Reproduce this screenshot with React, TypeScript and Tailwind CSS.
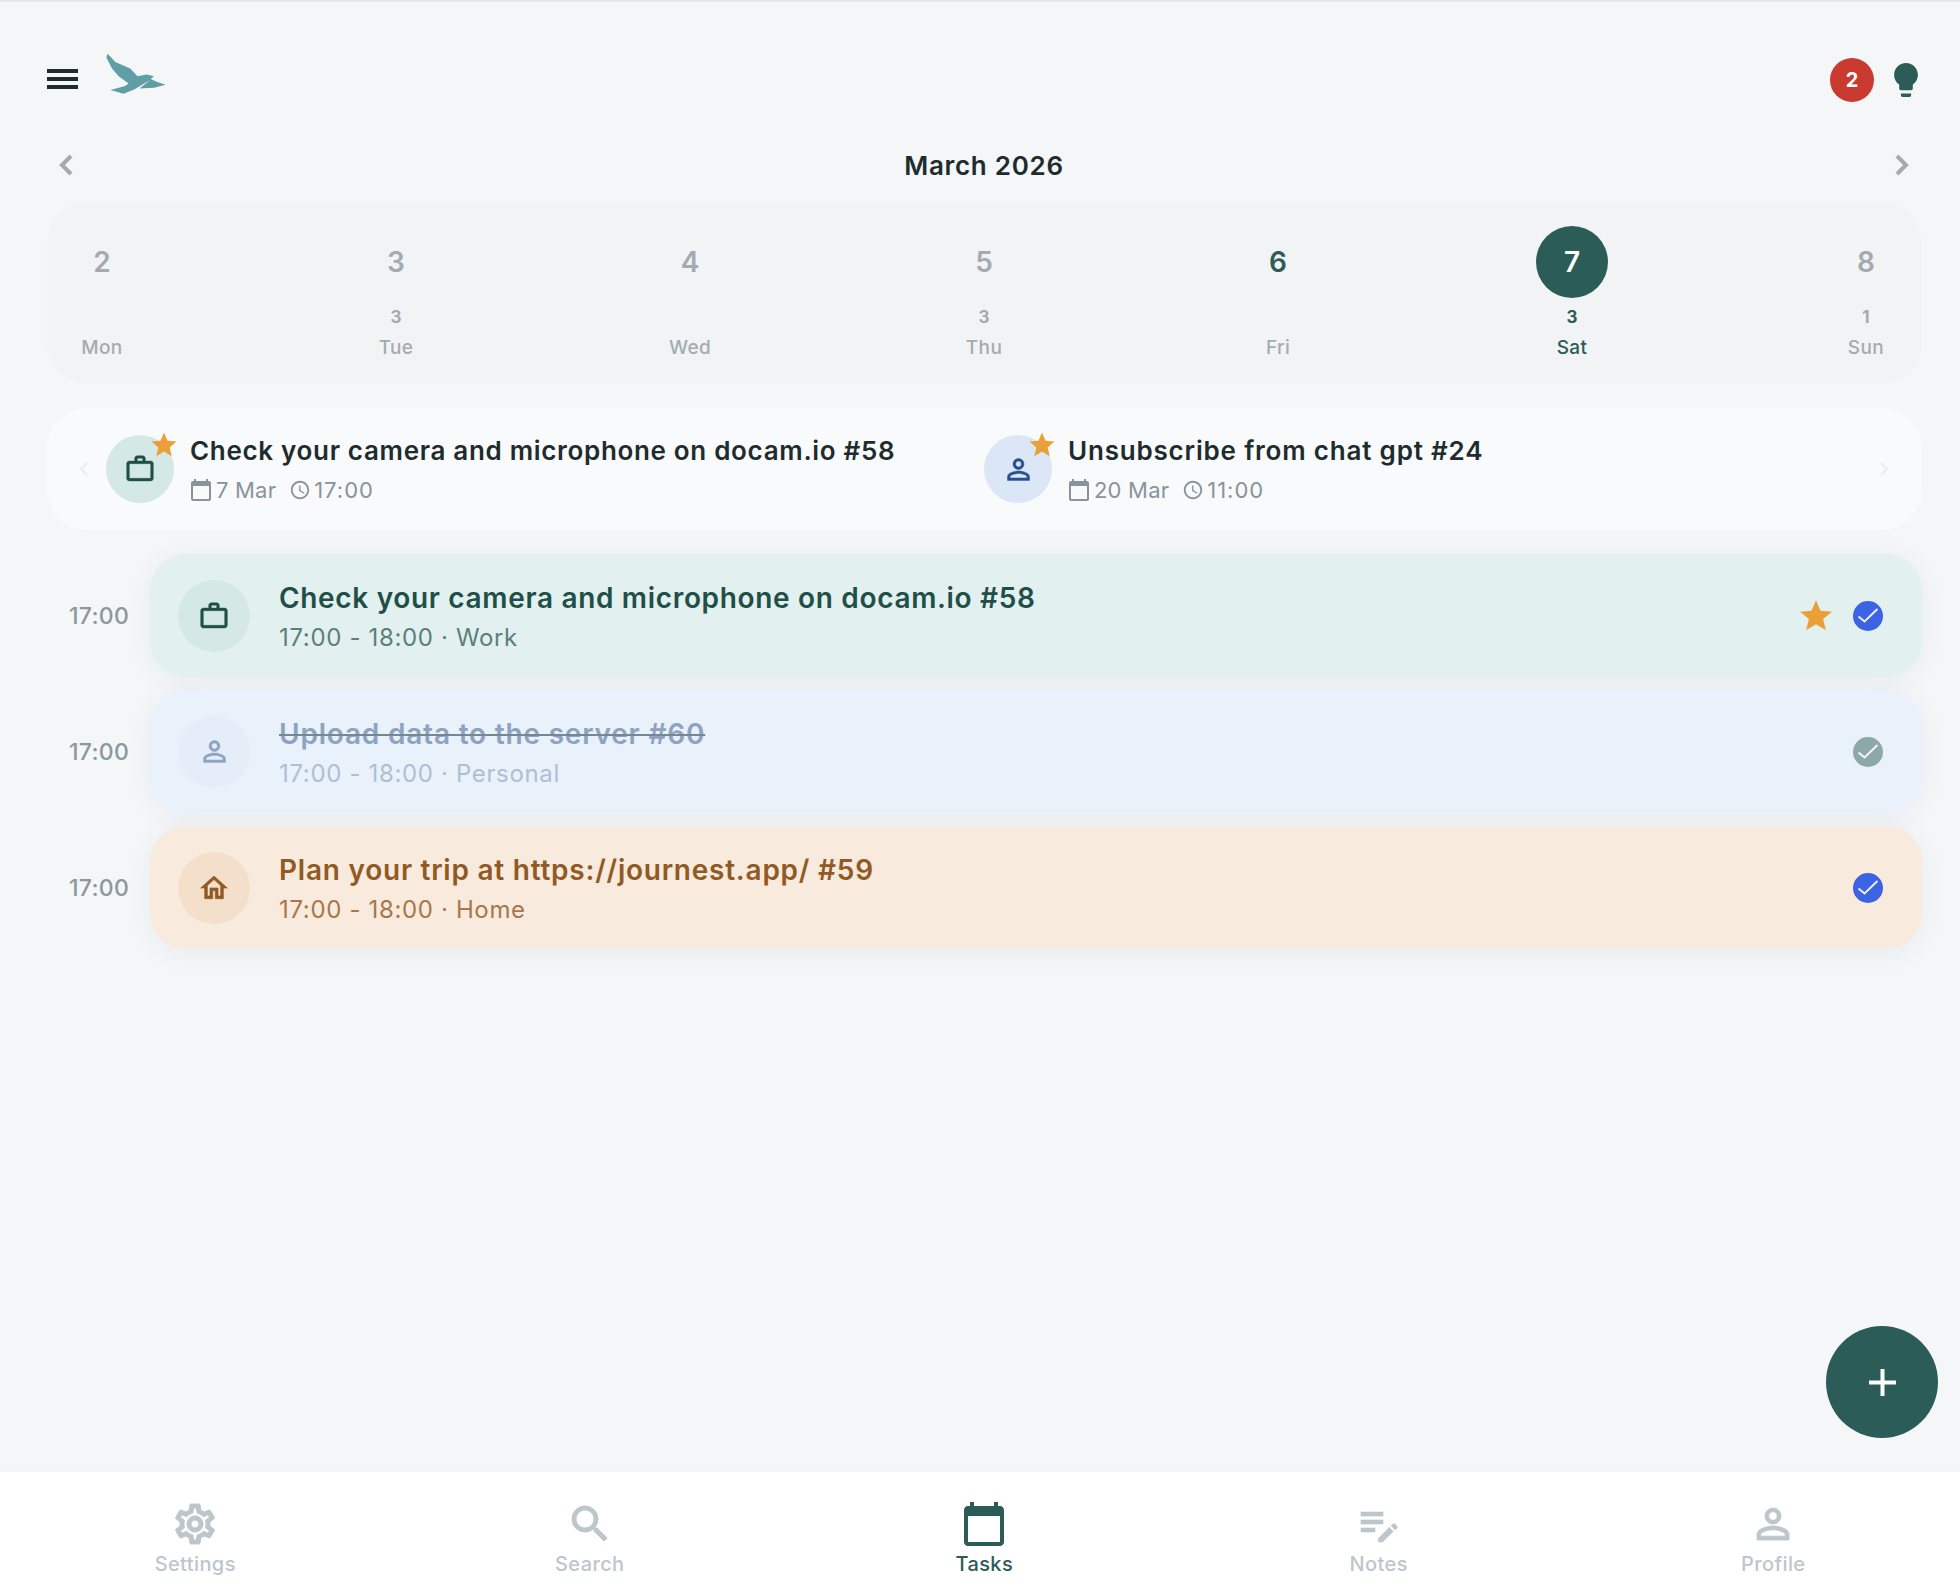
import { MdOutlineAccessTime, MdStar, MdChevronLeft, MdChevronRight } from "react-icons/md";
import type { ReactNode } from "react";

const CALENDAR = "M20 3h-1V1h-2v2H7V1H5v2H4c-1.1 0-2 .9-2 2v16c0 1.1.9 2 2 2h16c1.1 0 2-.9 2-2V5c0-1.1-.9-2-2-2zm0 18H4V8h16v13z";
const SETTINGS = "M19.43 12.98c.04-.32.07-.64.07-.98 0-.34-.03-.66-.07-.98l2.11-1.65c.19-.15.24-.42.12-.64l-2-3.46a.5.5 0 0 0-.61-.22l-2.49 1c-.52-.4-1.08-.73-1.69-.98l-.38-2.65A.488.488 0 0 0 14 2h-4c-.25 0-.46.18-.49.42l-.38 2.65c-.61.25-1.17.59-1.69.98l-2.49-1a.566.566 0 0 0-.18-.03c-.17 0-.34.09-.43.25l-2 3.46c-.13.22-.07.49.12.64l2.11 1.65c-.04.32-.07.65-.07.98 0 .33.03.66.07.98l-2.11 1.65c-.19.15-.24.42-.12.64l2 3.46a.5.5 0 0 0 .61.22l2.49-1c.52.4 1.08.73 1.69.98l.38 2.65c.03.24.24.42.49.42h4c.25 0 .46-.18.49-.42l.38-2.65c.61-.25 1.17-.59 1.69-.98l2.49 1c.06.02.12.03.18.03.17 0 .34-.09.43-.25l2-3.46c.12-.22.07-.49-.12-.64l-2.11-1.65zm-1.98-1.71c.04.31.05.52.05.73 0 .21-.02.43-.05.73l-.14 1.13.89.7 1.08.84-.7 1.21-1.27-.51-1.04-.42-.9.68c-.43.32-.84.56-1.25.73l-1.06.43-.16 1.13-.2 1.35h-1.4l-.19-1.35-.16-1.13-1.06-.43c-.43-.18-.83-.41-1.23-.71l-.91-.7-1.06.43-1.27.51-.7-1.21 1.08-.84.89-.7-.14-1.13c-.03-.31-.05-.54-.05-.74s.02-.43.05-.73l.14-1.13-.89-.7-1.08-.84.7-1.21 1.27.51 1.04.42.9-.68c.43-.32.84-.56 1.25-.73l1.06-.43.16-1.13.2-1.35h1.39l.19 1.35.16 1.13 1.06.43c.43.18.83.41 1.23.71l.91.7 1.06-.43 1.27-.51.7 1.21-1.07.85-.89.7.14 1.13zM12 8c-2.21 0-4 1.79-4 4s1.79 4 4 4 4-1.79 4-4-1.79-4-4-4zm0 6c-1.1 0-2-.9-2-2s.9-2 2-2 2 .9 2 2-.9 2-2 2z";
const SEARCH = "M15.5 14h-.79l-.28-.27A6.471 6.471 0 0 0 16 9.5 6.5 6.5 0 1 0 9.5 16c1.61 0 3.09-.59 4.23-1.57l.27.28v.79l5 4.99L20.49 19l-4.99-5zm-6 0C7.01 14 5 11.99 5 9.5S7.01 5 9.5 5 14 7.01 14 9.5 11.99 14 9.5 14z";
const PERSON = "M12 5.9a2.1 2.1 0 1 1 0 4.2 2.1 2.1 0 0 1 0-4.2m0 9c2.97 0 6.1 1.46 6.1 2.1v1.1H5.9V17c0-.64 3.13-2.1 6.1-2.1M12 4C9.79 4 8 5.79 8 8s1.79 4 4 4 4-1.79 4-4-1.79-4-4-4zm0 9c-2.67 0-8 1.34-8 4v3h16v-3c0-2.66-5.33-4-8-4z";
const WORK = "M14 6V4h-4v2h4zM4 8v11h16V8H4zm16-2c1.11 0 2 .89 2 2v11c0 1.11-.89 2-2 2H4c-1.11 0-2-.89-2-2l.01-11c0-1.11.88-2 1.99-2h4V4c0-1.11.89-2 2-2h4c1.11 0 2 .89 2 2v2h4z";
const HOME = "M12 5.69l5 4.5V18h-2v-6H9v6H7v-7.81l5-4.5M12 3L2 12h3v8h6v-6h2v6h6v-8h3L12 3z";
const NOTE = "M3 10h11v2H3v-2zm0-2h11V6H3v2zm0 8h7v-2H3v2zm15.01-3.13l.71-.71c.39-.39 1.02-.39 1.41 0l.71.71c.39.39.39 1.02 0 1.41l-.71.71-2.12-2.12zm-1.06 1.06l-5.3 5.3V21h2.12l5.3-5.3-2.12-2.12z";

const DAYS = [
  { num: "2", count: "", label: "Mon" },
  { num: "3", count: "3", label: "Tue" },
  { num: "4", count: "", label: "Wed" },
  { num: "5", count: "3", label: "Thu" },
  { num: "6", count: "", label: "Fri", today: true },
  { num: "7", count: "3", label: "Sat", selected: true },
  { num: "8", count: "1", label: "Sun" },
];

function Icon({ d, className, bold = 0 }: { d: string; className: string; bold?: number }) {
  return (
    <svg viewBox="0 0 24 24" fill="currentColor" stroke="currentColor" strokeWidth={bold} className={className}>
      <path d={d} />
    </svg>
  );
}

function Logo() {
  return (
    <svg viewBox="315 155 185 130" className="w-[62px] h-[43px]" fill="#5f9ea5">
      <path d="M322 160 L345 185 L390 205 L412 228 L440 223 L462 228 L452 237 L470 245 L497 254 L462 263 L418 265 L450 240 L402 268 L370 281 L330 270 L375 258 L385 250 L355 228 L335 205 L318 172 Z" />
    </svg>
  );
}

function Check({ done }: { done?: boolean }) {
  return (
    <svg viewBox="0 0 30 30" className="w-[30px] h-[30px] shrink-0">
      <circle cx="15" cy="15" r="15" fill={done ? "#8ca9a7" : "#3b63e4"} />
      <path d="M5.500 15.500 L11.500 20.500 L24.500 8" fill="none" stroke="#fff" strokeOpacity="0.9" strokeWidth="2" />
    </svg>
  );
}

function Chevron({ right }: { right?: boolean }) {
  return (
    <svg viewBox="0 0 14 22" className="w-[14px] h-[22px]" fill="none" stroke="#a2acb0" strokeWidth="4">
      <path d={right ? "M2 2 L11 11 L2 20" : "M12 2 L3 11 L12 20"} />
    </svg>
  );
}

function Day({ num, count, label, today, selected }: { num: string; count: string; label: string; today?: boolean; selected?: boolean }) {
  return (
    <div className={`w-[72px] flex flex-col items-center ${selected ? "text-[#2b5c58]" : "text-[#a2acb0]"}`}>
      <div className={`w-[72px] h-[72px] rounded-full flex items-center justify-center text-[28px] font-semibold ${selected ? "bg-[#2b5c58] text-white" : today ? "text-[#2b5c58]" : ""}`}>
        {num}
      </div>
      <div className="h-[20px] mt-[9px] text-[17px] leading-[20px] font-bold">{count}</div>
      <div className="mt-[9px] text-[19px] leading-[24px] font-medium tracking-[0.02em]">{label}</div>
    </div>
  );
}

function Upcoming({ icon, circle, title, titleCls, date, time, width }: { icon: ReactNode; circle: string; title: string; titleCls: string; date: string; time: string; width: string }) {
  return (
    <div className={`flex items-center ${width}`}>
      <div className={`relative w-[68px] h-[68px] rounded-full flex items-center justify-center shrink-0 ${circle}`}>
        {icon}
        <MdStar className="absolute -top-[5px] -right-[5px] text-[#eba037]" size={30} />
      </div>
      <div className="ml-4">
        <div className={`text-[26px] leading-[32px] font-semibold text-[#1e2c2e] whitespace-nowrap ${titleCls}`}>{title}</div>
        <div className="mt-[9px] flex items-center text-[22px] leading-[28px] text-[#87949a]">
          <Icon d={CALENDAR} className="w-[24px] h-[24px] -ml-[1px]" />
          <span className="ml-[3px] tracking-[0.2px]">{date}</span>
          <MdOutlineAccessTime size={22} className="ml-[13px]" />
          <span className="ml-[3px] tracking-[1px]">{time}</span>
        </div>
      </div>
    </div>
  );
}

function TaskRow({ icon, title, sub, bg, circle, titleCls, subCls, star, done }: { icon: ReactNode; title: string; sub: string; bg: string; circle: string; titleCls: string; subCls: string; star?: boolean; done?: boolean }) {
  return (
    <div className="flex items-center">
      <div className="w-[103px] pl-[22px] pt-[2px] text-[23px] text-[#8b999d] font-medium tracking-[0.3px] shrink-0">17:00</div>
      <div className={`flex-1 h-[123px] rounded-[36px] flex items-center pl-7 pr-[39px] shadow-[0_4px_30px_rgba(30,60,70,0.05)] ${bg}`}>
        <div className={`w-[72px] h-[72px] rounded-full flex items-center justify-center shrink-0 ${circle}`}>{icon}</div>
        <div className="ml-[29px] flex-1 pt-[3px]">
          <div className={`text-[28px] leading-[36px] font-semibold ${titleCls}`}>{title}</div>
          <div className={`mt-[6px] text-[24px] leading-[32px] tracking-[0.65px] ${subCls}`}>{sub}</div>
        </div>
        {star && <MdStar size={38} className="text-[#eba037] mr-[18px]" />}
        <Check done={done} />
      </div>
    </div>
  );
}

function NavItem({ icon, label, active }: { icon: ReactNode; label: string; active?: boolean }) {
  return (
    <div className={`w-[394.5px] shrink-0 flex flex-col items-center ${active ? "text-[#2b5c58]" : "text-[#bcc6cb]"}`}>
      <div className="h-[48px] flex items-center justify-center">{icon}</div>
      <div className="mt-[3px] text-[20px] leading-[26px] font-medium tracking-[0.4px]">{label}</div>
    </div>
  );
}

export default function App() {
  return (
    <div className="relative h-[1590px] overflow-hidden flex flex-col bg-[#f4f6f8] border-t-2 border-[#e4e6e9] font-['Inter',sans-serif]">
      <header className="h-[144px] pt-4 pl-[47px] pr-[42px] flex items-center justify-between shrink-0">
        <div className="flex items-center -mt-[4px]">
          <div className="w-[31px] flex flex-col gap-[4px] -mt-[2px]">
            <div className="h-1 bg-[#1e2c2e]" />
            <div className="h-1 bg-[#1e2c2e]" />
            <div className="h-1 bg-[#1e2c2e]" />
          </div>
          <div className="ml-[27px] -mt-[14px]">
            <Logo />
          </div>
        </div>
        <div className="flex items-center gap-5 -mt-[4px]">
          <div className="w-[44px] h-[44px] rounded-full bg-[#c93a31] text-white text-[20px] font-bold flex items-center justify-center">2</div>
          <svg viewBox="5 2 14 20" className="w-[24px] h-[34px]" fill="#2b5c58">
            <path d="M9 21c0 .5.4 1 1 1h4c.6 0 1-.5 1-1v-1H9v1zm3-19C8.100 2 5 5.100 5 9c0 2.400 1.200 4.500 3 5.700V17c0 .5.4 1 1 1h6c.6 0 1-.5 1-1v-2.300c1.800-1.300 3-3.400 3-5.700 0-3.900-3.100-7-7-7z" />
          </svg>
        </div>
      </header>

      <div className="h-[40px] pl-[59px] pr-[51px] flex items-center justify-between shrink-0 -mt-[1px]">
        <Chevron />
        <div className="text-[26px] font-semibold text-[#1e2c2e] tracking-[0.7px]">March 2026</div>
        <Chevron right />
      </div>

      <div className="ml-[47px] mr-[38px] mt-[17px] h-[182px] rounded-[40px] bg-[#f2f3f5] pl-[19px] pr-[20px] pt-6 flex justify-between shrink-0">
        {DAYS.map((d) => (
          <Day key={d.label} {...d} />
        ))}
      </div>

      <div className="relative ml-[47px] mr-[38px] mt-6 h-[122px] rounded-[40px] bg-[#f9fafc] flex items-center pl-[59px] shrink-0">
        <MdChevronLeft size={28} className="absolute left-[23px] top-[47px] text-[#eceef0]" />
        <Upcoming
          width="w-[878px]"
          title="Check your camera and microphone on docam.io #58"
          titleCls="tracking-[0.68px]"
          date="7 Mar"
          time="17:00"
          circle="bg-[#d4e9e5]"
          icon={<Icon d={WORK} bold={0.3} className="w-[32px] h-[32px] text-[#1f4f47]" />}
        />
        <Upcoming
          width=""
          title="Unsubscribe from chat gpt #24"
          titleCls="tracking-[0.81px]"
          date="20 Mar"
          time="11:00"
          circle="bg-[#dbe6f7]"
          icon={<Icon d={PERSON} bold={0.3} className="w-[33px] h-[33px] text-[#274f8f]" />}
        />
        <MdChevronRight size={28} className="absolute right-[24px] top-[47px] text-[#eceef0]" />
      </div>

      <div className="mt-6 pl-[47px] pr-[38px] flex flex-col gap-[13px] shrink-0">
        <TaskRow
          title="Check your camera and microphone on docam.io #58"
          sub="17:00 - 18:00 · Work"
          bg="bg-[#e2f1ef]"
          circle="bg-[#d4e9e5]"
          titleCls="text-[#1f4f47] tracking-[0.67px]"
          subCls="text-[#5b807a]"
          star
          icon={<Icon d={WORK} bold={0.3} className="w-[32px] h-[32px] text-[#1f4f47]" />}
        />
        <TaskRow
          title="Upload data to the server #60"
          sub="17:00 - 18:00 · Personal"
          bg="bg-[#e9f1fa]"
          circle="bg-[#e5edf8]"
          titleCls="text-[#8ea3c2] line-through decoration-[#75878f] tracking-[0.8px]"
          subCls="text-[#afbed4]"
          done
          icon={<Icon d={PERSON} bold={0.3} className="w-[33px] h-[33px] text-[#8ea3c2]" />}
        />
        <TaskRow
          title="Plan your trip at https://journest.app/ #59"
          sub="17:00 - 18:00 · Home"
          bg="bg-[#f8eadc]"
          circle="bg-[#f3dfca]"
          titleCls="text-[#915a25] tracking-[0.76px]"
          subCls="text-[#a8774a]"
          icon={<Icon d={HOME} bold={0.5} className="w-[32px] h-[32px] text-[#915a25]" />}
        />
      </div>

      <button className="absolute left-[1826px] top-[1324px] w-[112px] h-[112px] rounded-full bg-[#2b5c58] flex items-center justify-center">
        <svg viewBox="0 0 27 27" className="w-[27px] h-[27px]">
          <path d="M11.500 0h4v11.500H27v4H15.500V27h-4V15.500H0v-4h11.500z" fill="#fff" />
        </svg>
      </button>

      <nav className="mt-auto h-[119px] bg-white border-t border-[#f0f2f4] overflow-hidden pt-[28px] shrink-0">
        <div className="flex -ml-[2px]">
          <NavItem label="Settings" icon={<Icon d={SETTINGS} bold={0.5} className="w-[48px] h-[48px]" />} />
          <NavItem label="Search" icon={<Icon d={SEARCH} bold={0.5} className="w-[48px] h-[48px]" />} />
          <NavItem label="Tasks" active icon={<Icon d={CALENDAR} className="w-[48px] h-[48px]" />} />
          <NavItem label="Notes" icon={<Icon d={NOTE} bold={0.3} className="w-[48px] h-[48px]" />} />
          <NavItem label="Profile" icon={<Icon d={PERSON} bold={0.4} className="w-[48px] h-[48px]" />} />
        </div>
      </nav>
    </div>
  );
}
